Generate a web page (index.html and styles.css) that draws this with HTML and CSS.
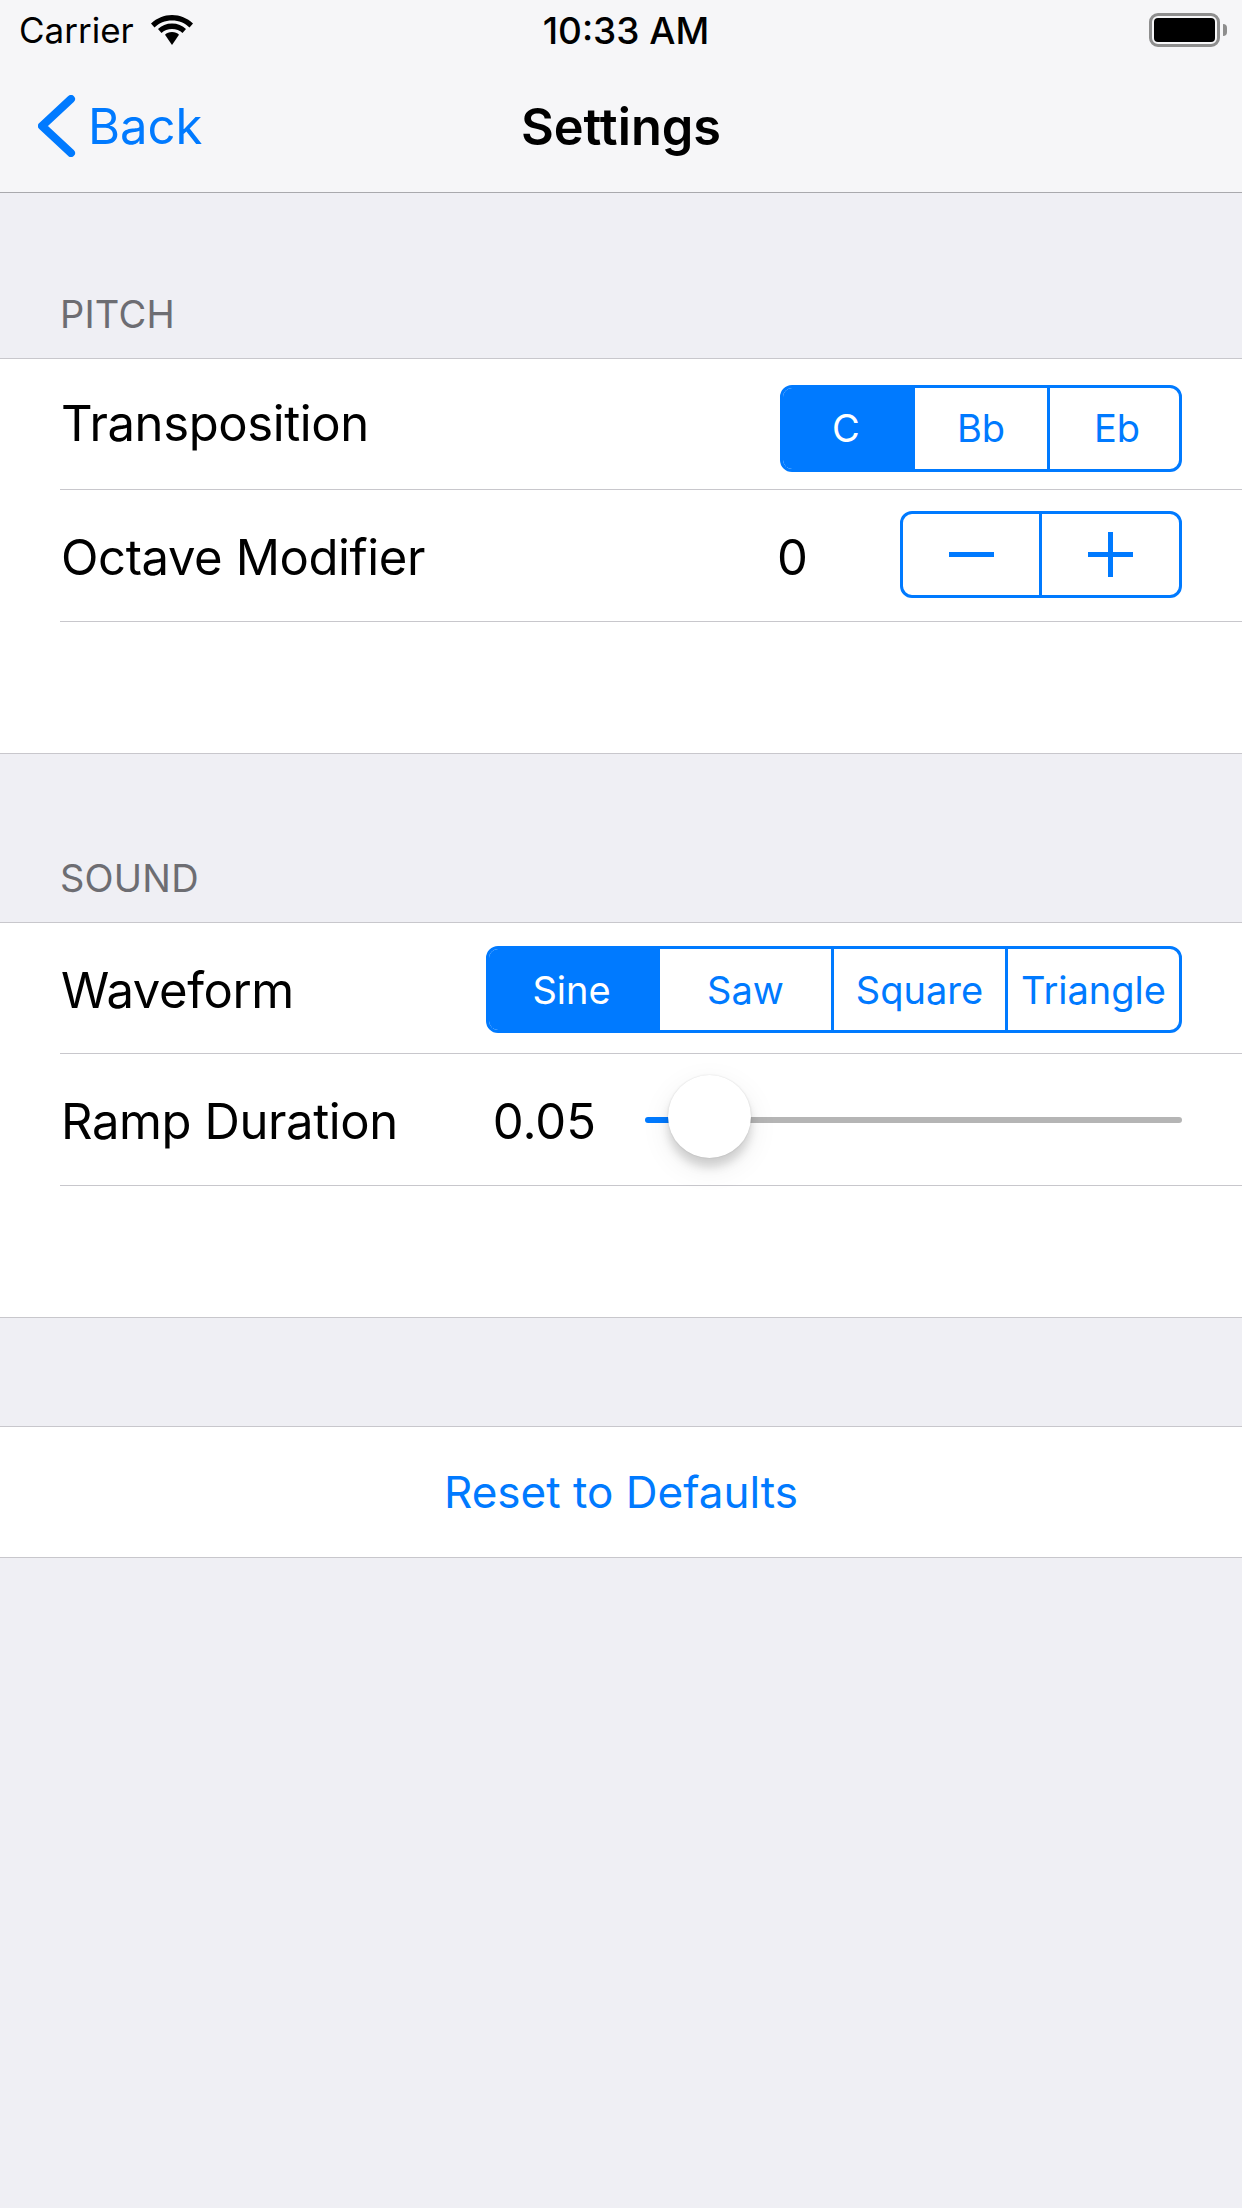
FILE: index.html
```html
<!DOCTYPE html>
<html lang="en">
<head>
<meta charset="utf-8">
<title>Settings</title>
<link rel="stylesheet" href="styles.css">
</head>
<body>
<header class="top">
  <div class="status">
    <div class="status-left">
      <span class="carrier">Carrier</span>
      <svg class="wifi" width="42" height="30" viewBox="0 0 42 30"><path d="M21 0C13 0 6 3 0 8.500L3.500 12.500C8 8 14 5.500 21 5.500C28 5.500 34 8 38.500 12.500L42 8.500C36 3 29 0 21 0Z"/><path d="M21 8.500C15.500 8.500 10.500 10.500 7 14L10.500 18C13 15.500 17 14 21 14C25 14 29 15.500 31.500 18L35 14C31.500 10.500 26.500 8.500 21 8.500Z"/><path d="M21 17C18 17 15.700 18 14 19.800L21 30L28 19.800C26.300 18 24 17 21 17Z"/></svg>
    </div>
    <span class="clock">10:33 AM</span>
    <div class="status-right">
      <div class="battery-body"><div class="battery-fill"></div></div>
      <div class="battery-nub"></div>
    </div>
  </div>
  <nav class="nav">
    <div class="back">
      <svg class="chevron" width="38" height="62" viewBox="0 0 38 62"><path d="M33 4L4 31L33 58" fill="none" stroke="#007aff" stroke-width="8" stroke-linecap="round" stroke-linejoin="round"/></svg>
      <span>Back</span>
    </div>
    <h1 class="title">Settings</h1>
  </nav>
</header>

<main>
  <h2 class="section-title">PITCH</h2>
  <section class="group">
    <div class="row row-short row-pitch">
      <span class="label">Transposition</span>
      <div class="seg seg-pitch">
        <div class="cell on">C</div><div class="cell">Bb</div><div class="cell">Eb</div>
      </div>
    </div>
    <div class="row row-low">
      <span class="label">Octave Modifier</span>
      <span class="value value-octave">0</span>
      <div class="seg stepper">
        <div class="cell"><span class="minus"></span></div>
        <div class="cell"><span class="plus"></span></div>
      </div>
    </div>
    <div class="row blank"></div>
  </section>

  <h2 class="section-title second">SOUND</h2>
  <section class="group">
    <div class="row row-short row-low">
      <span class="label">Waveform</span>
      <div class="seg seg-wave">
        <div class="cell on">Sine</div><div class="cell">Saw</div><div class="cell">Square</div><div class="cell">Triangle</div>
      </div>
    </div>
    <div class="row row-low">
      <span class="label">Ramp Duration</span>
      <span class="value value-ramp">0.05</span>
      <div class="slider">
        <div class="track-on"></div>
        <div class="track-off"></div>
        <div class="thumb"></div>
      </div>
    </div>
    <div class="row blank"></div>
  </section>

  <section class="group reset">
    <div class="reset-text">Reset to Defaults</div>
  </section>
</main>
</body>
</html>
```
FILE: styles.css
```css
* { box-sizing: border-box; }
html, body { margin: 0; padding: 0; }
body {
  width: 1242px;
  height: 2208px;
  background: #efeff4;
  font-family: Inter, "Liberation Sans", sans-serif;
  color: #000;
  overflow: hidden;
}
.top {
  height: 193px;
  background: #f6f6f8;
  border-bottom: 1px solid #a9a9ad;
}
.status {
  height: 60px;
  display: flex;
  align-items: center;
  padding: 0 15px 0 19px;
}
.status-left { flex: 1 1 0; display: flex; align-items: center; gap: 17px; }
.carrier { font-size: 35px; }
.clock { font-size: 37px; font-weight: 500; margin-left: 6px; }
.status-right { flex: 1 1 0; display: flex; align-items: center; justify-content: flex-end; gap: 3px; }
.battery-body {
  width: 71px;
  height: 34px;
  border: 3px solid #8e8e8e;
  border-radius: 9px;
  padding: 2px;
}
.battery-fill { height: 100%; background: #000; border-radius: 4px; }
.battery-nub { width: 4px; height: 12px; background: #8e8e8e; border-radius: 0 4px 4px 0; }
.nav {
  height: 132px;
  display: grid;
  grid-template-columns: 1fr auto 1fr;
  align-items: center;
}
.back {
  padding-left: 38px;
  display: flex;
  align-items: center;
  gap: 12px;
  color: #007aff;
  font-size: 49px;
}
.title { margin: 0; font-size: 50.5px; font-weight: 600; }
.section-title {
  margin: 0;
  height: 165px;
  padding: 0 60px 21px;
  display: flex;
  align-items: flex-end;
  font-size: 38px;
  letter-spacing: 0.2px;
  font-weight: 400;
  color: #6d6d72;
}
.section-title.second { height: 168px; }
.group {
  background: #fff;
  border-top: 1px solid #c8c7cc;
  border-bottom: 1px solid #c8c7cc;
}
.row {
  height: 132px;
  margin-left: 60px;
  padding: 0 60px 0 1px;
  display: flex;
  align-items: center;
  border-bottom: 1px solid #c8c7cc;
}
.row-short { height: 131px; }
.row.blank { border-bottom: 0; height: 131px; }
.label { font-size: 49px; letter-spacing: -0.4px; }
.row-pitch .label { margin-bottom: 2px; }
.row-low .label, .row-low .value { margin-top: 4px; }
.value { font-size: 49px; margin-left: auto; }
.value-octave { margin-right: 92px; }
.value-ramp { margin-right: 49px; }
.seg {
  margin-left: auto;
  display: flex;
  height: 87px;
  border: 3px solid #007aff;
  border-radius: 12px;
  overflow: hidden;
  color: #007aff;
  font-size: 38px;
}
.cell {
  flex: 1 1 0;
  display: flex;
  align-items: center;
  justify-content: center;
  border-left: 3px solid #007aff;
}
.cell:first-child, .cell.on + .cell { border-left: 0; }
.cell.on { background: #007aff; color: #fff; padding-right: 6px; }
.seg-pitch { width: 402px; margin-top: 8px; }
.seg-pitch .cell { flex: 0 0 132px; }
.seg-pitch .cell:last-child { padding-left: 5px; }
.seg-wave { width: 696px; margin-top: 3px; }
.seg-wave .cell { flex: 0 0 174px; }
.seg-wave .cell.on, .seg-wave .cell.on + .cell { flex-basis: 171px; }
.stepper { width: 282px; margin-left: 0; margin-top: -2px; }
.stepper .cell:first-child { flex: 0 0 136px; }
.minus, .plus { display: block; position: relative; width: 45px; height: 5px; background: #007aff; }
.plus::after {
  content: "";
  position: absolute;
  left: 20px;
  top: -20px;
  width: 5px;
  height: 45px;
  background: #007aff;
}
.slider {
  width: 537px;
  height: 6px;
  display: flex;
  position: relative;
  margin-top: 1px;
}
.track-on { width: 30px; background: #007aff; border-radius: 3px 0 0 3px; }
.track-off { flex: 1; background: #b5b5b5; border-radius: 0 3px 3px 0; }
.thumb {
  position: absolute;
  left: 23px;
  top: -42px;
  width: 83px;
  height: 83px;
  border-radius: 50%;
  background: #fff;
  box-shadow: 0 9px 10px rgba(0,0,0,.15), 0 0 2px rgba(0,0,0,.14), 0 10px 30px rgba(0,0,0,.08);
}
.reset { margin-top: 108px; }
.reset-text {
  height: 130px;
  display: flex;
  align-items: center;
  justify-content: center;
  color: #007aff;
  font-size: 44px;
}
```
